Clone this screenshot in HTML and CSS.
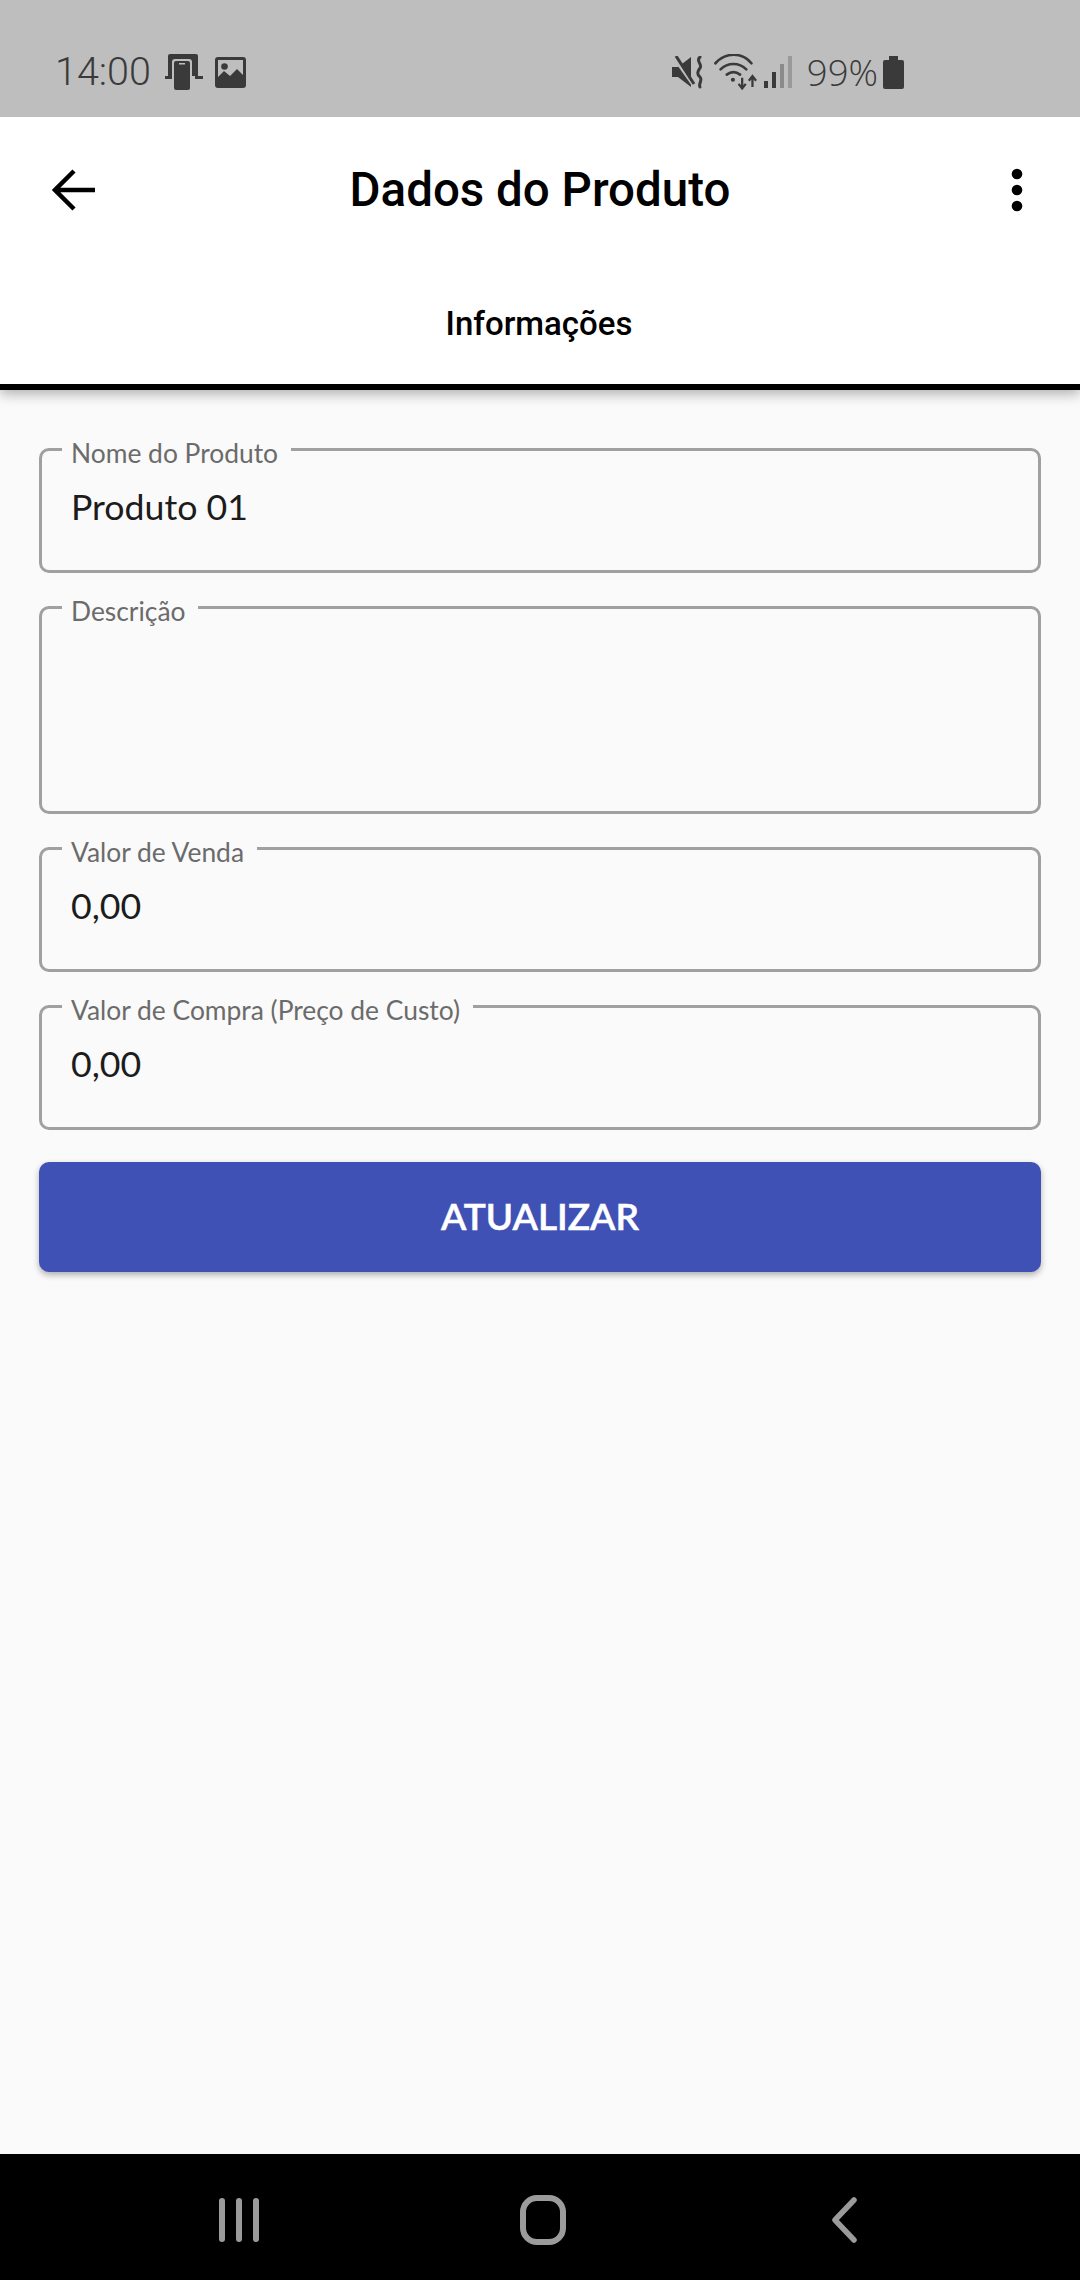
FILE: index.html
```html
<!DOCTYPE html>
<html lang="pt-BR">
<head>
<meta charset="utf-8">
<title>Dados do Produto</title>
<link rel="stylesheet" href="styles.css">
</head>
<body>
<div class="screen">
  <div class="status">
    <div class="status-group">
      <span class="clock">14:00</span>
      <svg class="ic ic-cast" width="38" height="36" viewBox="0 0 38 36"><path d="M5 0h26a2 2 0 0 1 2 2v20H3V2a2 2 0 0 1 2-2z" fill="#3a3a3a"/><path d="M0 22h8v3H0zM30 22h8v3h-8z" fill="#3a3a3a"/><rect x="7" y="5" width="20" height="31" rx="3" fill="#bebebe"/><path fill-rule="evenodd" d="M11 7h12a2 2 0 0 1 2 2v25a2 2 0 0 1-2 2H11a2 2 0 0 1-2-2V9a2 2 0 0 1 2-2zm3 2v1.500h6V9z" fill="#3a3a3a"/></svg>
      <svg class="ic ic-img" width="31" height="31" viewBox="0 0 31 31"><path fill-rule="evenodd" d="M3 0h25a3 3 0 0 1 3 3v25a3 3 0 0 1-3 3H3a3 3 0 0 1-3-3V3a3 3 0 0 1 3-3zm0 3v17l6-6 6 5 7-7 6 6V3z" fill="#3a3a3a"/><circle cx="9.500" cy="9.500" r="3.300" fill="#3a3a3a"/></svg>
    </div>
    <div class="status-group">
      <svg class="ic" width="32" height="33" viewBox="0 0 32 33"><path d="M0 11h6l13-10v30L6 21H0z" fill="#3a3a3a"/><path d="M2 2l19 27" stroke="#bebebe" stroke-width="3"/><path d="M4 0l18 28" stroke="#3a3a3a" stroke-width="3"/><path d="M28 1c-5 4 3 7 0 11s-3 6 0 9-2 7 0 10" fill="none" stroke="#3a3a3a" stroke-width="3" stroke-linecap="round"/></svg>
      <svg class="ic ic-wifi" width="44" height="36" viewBox="0 0 42 35"><g fill="none" stroke="#3a3a3a" stroke-width="2.600" stroke-linecap="round"><path d="M1 9c10-11 26-11 35 0"/><path d="M6 15c7-7 18-7 25 0"/><path d="M12 20c4-3 9-3 13 0"/></g><circle cx="18" cy="25" r="2" fill="#3a3a3a"/><path d="M27 23v10M23.500 29l3.500 4.500 3.500-4.500M37 32V22M33.500 26l3.500-4.500 3.500 4.500" fill="none" stroke="#3a3a3a" stroke-width="2.200"/></svg>
      <svg class="ic ic-signal" width="28" height="32" viewBox="0 0 28 32"><rect x="0" y="25" width="4" height="7" fill="#3a3a3a"/><rect x="8" y="16" width="4" height="16" fill="#3a3a3a"/><rect x="16" y="8" width="4" height="24" fill="#8a8a8a"/><rect x="24" y="0" width="4" height="32" fill="#9a9a9a"/></svg>
      <span class="pct">99%</span>
      <svg class="ic ic-batt" width="21" height="33" viewBox="0 0 21 33"><path d="M6 0h9v4h4a2 2 0 0 1 2 2v25a2 2 0 0 1-2 2H2a2 2 0 0 1-2-2V6a2 2 0 0 1 2-2h4z" fill="#3a3a3a"/></svg>
    </div>
  </div>

  <header class="appbar">
    <div class="toolbar">
      <svg class="back" width="44" height="42" viewBox="0 0 44 42"><path d="M43 21H3M22 2L3 21l19 19" fill="none" stroke="#000" stroke-width="4.500"/></svg>
      <h1 class="title">Dados do Produto</h1>
      <svg class="more" width="12" height="44" viewBox="0 0 12 44"><circle cx="6" cy="6" r="5.300"/><circle cx="6" cy="22" r="5.300"/><circle cx="6" cy="38" r="5.300"/></svg>
    </div>
    <div class="tab">Informações</div>
  </header>

  <main class="content">
    <fieldset class="field">
      <legend class="label">Nome do Produto</legend>
      <div class="value">Produto 01</div>
    </fieldset>
    <fieldset class="field field-tall">
      <legend class="label">Descrição</legend>
    </fieldset>
    <fieldset class="field">
      <legend class="label">Valor de Venda</legend>
      <div class="value">0,00</div>
    </fieldset>
    <fieldset class="field">
      <legend class="label">Valor de Compra (Preço de Custo)</legend>
      <div class="value">0,00</div>
    </fieldset>
    <button class="submit" type="button">ATUALIZAR</button>
  </main>

  <nav class="navbar">
    <svg width="44" height="44" viewBox="0 0 44 44"><path d="M5 3v38M22 3v38M39 3v38" stroke="#9b9b9b" stroke-width="6" stroke-linecap="round"/></svg>
    <svg class="nav-home" width="46" height="50" viewBox="0 0 46 50"><rect x="3" y="3" width="40" height="44" rx="14" fill="none" stroke="#9b9b9b" stroke-width="6"/></svg>
    <svg width="28" height="46" viewBox="0 0 28 46"><path d="M24 3L5 23l19 20" fill="none" stroke="#9b9b9b" stroke-width="5.500" stroke-linecap="round" stroke-linejoin="round"/></svg>
  </nav>
</div>
</body>
</html>
```

FILE: styles.css
```css
* { box-sizing: border-box; }
html, body { margin: 0; padding: 0; }
body { width: 1080px; height: 2280px; overflow: hidden; background: #fafafa; font-family: "Lato", sans-serif; }
.screen { display: flex; flex-direction: column; height: 2280px; }

.status { height: 117px; flex: none; background: #bebebe; display: flex; justify-content: space-between; align-items: flex-start; padding: 54px 176px 0 55px; color: #3a3a3a; font-family: "Roboto", sans-serif; position: relative; z-index: 1; }
.status-group { display: flex; align-items: center; height: 36px; }
.clock { font-size: 39.500px; font-weight: 300; line-height: 36px; margin-right: 14px; }
.pct { font-family: "Open Sans", sans-serif; font-size: 36.500px; font-weight: 300; line-height: 36px; margin: 0 5px 0 15px; }
.ic { display: block; flex: none; }
.ic-img { margin-left: 12px; }
.ic-wifi { margin-left: 10px; }
.ic-signal { margin-left: 6px; }

.appbar { flex: none; height: 273px; background: #fff; border-bottom: 6px solid #000; box-shadow: 0 4px 12px rgba(0,0,0,.3); position: relative; display: flex; flex-direction: column; }
.toolbar { height: 145px; display: grid; grid-template-columns: 1fr auto 1fr; align-items: center; padding: 0 57px; }
.back { margin-left: -5px; }
.title { margin: 0; font-family: "Roboto", sans-serif; font-weight: 500; font-size: 47.500px; color: #000; text-align: center; }
.more { fill: #000; justify-self: end; }
.tab { font-family: "Roboto", sans-serif; font-weight: 500; font-size: 33px; line-height: 40px; color: #000; text-align: center; padding: 42px 2px 0 0; height: 82px; flex: none; }

.content { flex: 1; display: flex; flex-direction: column; gap: 17px; padding: 42px 39px 0; }
.field { margin: 0; padding: 0 0 0 20px; height: 141px; border: 3px solid #a0a0a0; border-radius: 10px; min-width: 0; }
.field-tall { height: 224px; }
.label { font-size: 26.400px; line-height: 27px; color: #6b6b6b; padding: 8px 13px 0 9px; margin: 0; }
.value { font-size: 35.700px; line-height: 42px; color: #1c1c1c; padding: 19px 9px 0; }
.submit { height: 110px; flex: none; border: 0; border-radius: 10px; background: #3f51b5; color: #fff; font-family: "Lato", sans-serif; font-weight: 600; font-size: 37px; -webkit-text-stroke: 0.5px #fff; box-shadow: 0 3px 6px rgba(0,0,0,.3); padding: 0 0 3px; margin-top: 15px; }

.navbar { flex: none; height: 126px; background: #000; display: flex; align-items: center; justify-content: space-between; padding: 5px 222px 0 217px; }
.nav-home { margin-right: 6px; }
```
